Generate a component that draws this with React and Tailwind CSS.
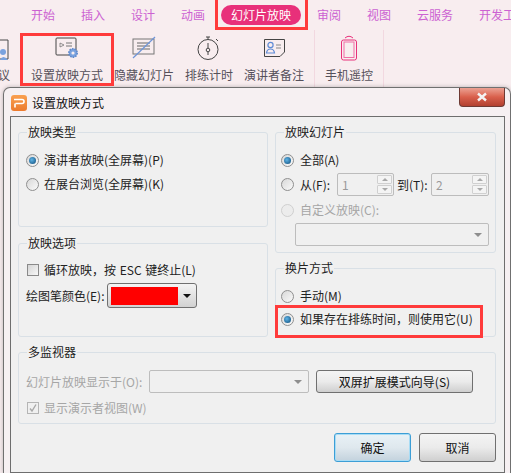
const Radio = ({ on, off }) => (
  <span className={`relative flex h-[13px] w-[13px] shrink-0 items-center justify-center rounded-full border ${off ? 'border-[#cfcfcf] bg-[#ececec]' : 'border-[#8f8f8f] bg-linear-to-br from-[#d8d8d8] to-[#fafafa]'}`}>
    {on && <span className="h-[7px] w-[7px] rounded-full bg-[radial-gradient(circle_at_40%_40%,#5fb4e6,#0d4a78)]" />}
  </span>
);

const Check = ({ checked, off }) => (
  <span className={`ml-[1px] flex h-[12px] w-[12px] shrink-0 items-center justify-center border ${off ? 'border-[#b5b5b5] bg-[#f0f0f0]' : 'border-[#8a8a8a] bg-linear-to-br from-[#d5d5d5] to-[#f8f8f8]'}`}>
    {checked && (
      <svg width="10" height="10" viewBox="0 0 10 10" fill="none"><path d="M2 5.5 L4 8 L8 1.5" stroke="#a8a8a8" strokeWidth="1.4" /></svg>
    )}
  </span>
);

const Group = ({ title, className, children }) => (
  <div className={`relative rounded-[3px] border border-[#d9e0e6] ${className}`}>
    <span className="absolute left-[8px] top-[-9px] bg-[#f0f0f0] px-[1px] text-[12px] leading-[16px] text-[#222]">{title}</span>
    {children}
  </div>
);

const Spin = ({ value, className }) => (
  <div className={`flex h-[23px] items-center justify-between rounded-[2px] border border-[#bcbcbc] bg-[#f0f0f0] pl-[4px] pr-[1px] ${className || ''}`}>
    <span className="text-[12px] text-[#9a9a9a]">{value}</span>
    <div className="flex h-[19px] w-[15px] flex-col gap-[1px]">
      <div className="flex flex-1 items-center justify-center rounded-[1px] border border-[#d0d0d0] bg-[#f4f4f4]">
        <span className="h-0 w-0 border-x-[3px] border-b-[3px] border-x-transparent border-b-[#a8a8a8]" />
      </div>
      <div className="flex flex-1 items-center justify-center rounded-[1px] border border-[#d0d0d0] bg-[#f4f4f4]">
        <span className="h-0 w-0 border-x-[3px] border-t-[3px] border-x-transparent border-t-[#a8a8a8]" />
      </div>
    </div>
  </div>
);

const DisabledSelect = ({ className }) => (
  <div className={`flex h-[23px] shrink-0 items-center justify-end rounded-[2px] border border-[#bdbdbd] bg-[#f0f0f0] pr-[6px] ${className}`}>
    <span className="h-0 w-0 border-x-[4px] border-t-[4px] border-x-transparent border-t-[#8e8e8e]" />
  </div>
);

const Tab = ({ children }) => <span className="shrink-0 whitespace-nowrap text-[12px] leading-[16px] text-[#cc62d2]">{children}</span>;

const Tool = ({ label, w, icon, className }) => (
  <div className={`flex shrink-0 flex-col items-center ${className || ''}`} style={{ width: w }}>
    <div className="flex h-[36px] items-center justify-center">{icon}</div>
    <span className="mt-[1px] whitespace-nowrap text-[12px] leading-[16px] text-[#55505a]">{label}</span>
  </div>
);

const Gear = () => (
  <g>
    <circle cx="18" cy="16" r="4.2" fill="#7aa2de" stroke="#5e88cc" strokeWidth="1.6" strokeDasharray="1.6 1" />
    <circle cx="18" cy="16" r="1.6" fill="#f8edef" />
  </g>
);

export default function App() {
  return (
    <div className="relative h-[473px] w-[511px] overflow-hidden bg-[#f8edef] font-['Noto_Sans_CJK_SC','Liberation_Sans',sans-serif]">
      {/* tabs */}
      <div className="flex h-[30px] items-center overflow-hidden pl-[31px]">
        <div className="flex shrink-0 gap-[26px]">
          <Tab>开始</Tab><Tab>插入</Tab><Tab>设计</Tab><Tab>动画</Tab>
        </div>
        <span className="ml-[16px] flex h-[20px] w-[80px] shrink-0 items-center justify-center rounded-full bg-[#e8307a] text-[12px] text-white">幻灯片放映</span>
        <div className="ml-[16px] flex shrink-0 gap-[26px]">
          <Tab>审阅</Tab><Tab>视图</Tab><Tab>云服务</Tab><Tab>开发工</Tab>
        </div>
      </div>

      {/* toolbar */}
      <div className="flex h-[57px] items-start overflow-hidden">
        <div className="relative h-[57px] w-[29px] shrink-0">
          <svg className="absolute left-0 top-[9px]" width="10" height="22" viewBox="0 0 10 22" fill="none">
            <path d="M0 1 H8 V20 H0" stroke="#4a4a4a" strokeWidth="1" />
            <circle cx="3" cy="13" r="3" fill="#7aa2de" />
            <path d="M0 21 Q3 15 8 21Z" fill="#7aa2de" />
          </svg>
          <span className="absolute left-[-2px] top-[37px] text-[12px] leading-[16px] text-[#55505a]">议</span>
        </div>
        <Tool label="设置放映方式" w={76} icon={
          <svg width="24" height="22" viewBox="0 0 24 22" fill="none">
            <rect x="1" y="1" width="20" height="17" rx="1" fill="#f8edef" stroke="#444" strokeWidth="1" />
            <path d="M5 6 L9 8 L5 10Z" stroke="#777" strokeWidth="0.8" />
            <path d="M11 6 H17 M11 9 H17" stroke="#777" strokeWidth="1" />
            <Gear />
          </svg>
        } />
        <Tool className="ml-[9px]" label="隐藏幻灯片" w={60} icon={
          <svg width="24" height="24" viewBox="0 0 24 24" fill="none">
            <rect x="1" y="3" width="21" height="15" stroke="#777" strokeWidth="1" />
            <path d="M5 7 H18 M5 10 H18 M5 13 H18" stroke="#666" strokeWidth="1" />
            <path d="M1 22 L23 1" stroke="#6f95d8" strokeWidth="1.2" />
          </svg>
        } />
        <Tool className="ml-[10px]" label="排练计时" w={50} icon={
          <svg width="24" height="24" viewBox="0 0 24 24" fill="none">
            <circle cx="11" cy="13.5" r="10" stroke="#444" strokeWidth="1" />
            <path d="M9 1 H13 M11 1 V3.5 M19 3 L21 5" stroke="#444" strokeWidth="1" />
            <circle cx="11" cy="14" r="1.8" stroke="#444" strokeWidth="1" />
            <path d="M11 7 V12 M11 16 V19" stroke="#444" strokeWidth="1" />
          </svg>
        } />
        <Tool className="ml-[10px]" label="演讲者备注" w={60} icon={
          <svg width="23" height="20" viewBox="0 0 23 20" fill="none">
            <path d="M1.5 1.5 H21.5 V14 L17 18.5 H1.5Z" stroke="#444" strokeWidth="1" />
            <circle cx="7.5" cy="7" r="2.6" stroke="#5f8bd6" strokeWidth="1.2" />
            <path d="M3.5 15 Q4 11 7.5 11 Q11 11 11.5 15Z" stroke="#5f8bd6" strokeWidth="1.2" />
            <path d="M13 7 H18 M13 10 H18" stroke="#888" strokeWidth="1" />
          </svg>
        } />
        <div className="ml-[10px] h-[57px] w-[1px] shrink-0 bg-[#f2d8e0]" />
        <Tool className="ml-[10px]" label="手机遥控" w={48} icon={
          <svg width="16" height="26" viewBox="0 0 16 26" fill="none">
            <path d="M4 3 Q8 -0.5 12 3" stroke="#e8307a" strokeWidth="1" />
            <rect x="0.5" y="5" width="15" height="20" rx="2" stroke="#e8307a" strokeWidth="1" />
            <rect x="3" y="7" width="10" height="15.5" stroke="#ef6fa5" strokeWidth="1" />
          </svg>
        } />
        <div className="ml-[10px] h-[57px] w-[1px] shrink-0 bg-[#f2d8e0]" />
      </div>

      {/* dialog window */}
      <div className="relative ml-[3px] w-[508px] rounded-t-[7px] border border-b-0 border-[#707070] bg-[#f6f0f2] shadow-[0_0_4px_rgba(0,0,0,0.25)]">
        <div className="flex h-[28px] items-center pl-[7px] pt-[1px]">
          <span className="flex h-[16px] w-[16px] items-center justify-center rounded-[3px] bg-linear-to-b from-[#f9a050] to-[#ec7a2c]">
            <svg width="12" height="10" viewBox="0 0 12 10" fill="none"><path d="M1 1.5 H9 Q11 1.5 11 3.5 Q11 5.5 9 5.5 H2.5 M2 5.5 V9.5" stroke="#fff" strokeWidth="1.6" /></svg>
          </span>
          <span className="ml-[5px] text-[12px] leading-[16px] text-[#111]">设置放映方式</span>
        </div>
        <div className="absolute right-[5px] top-0 flex h-[19px] w-[46px] items-center justify-center rounded-b-[4px] border border-t-0 border-[#6e3a34] bg-linear-to-b from-[#eba193] via-[#d9604c] to-[#b24030]">
          <svg width="12" height="10" viewBox="0 0 12 10" fill="none"><path d="M2 1.5 L10 8.5 M10 1.5 L2 8.5" stroke="#f4f4f4" strokeWidth="2.4" /></svg>
        </div>

        <div className="ml-[6px] h-[357px] w-[495px] border border-[#6e6e6e] bg-[#f0f0f0] pl-[7px] pt-[15px]">
          <div className="flex gap-[7px]">
            <div className="flex w-[250px] flex-col gap-[16px]">
              <Group title="放映类型" className="h-[95px] pl-[7px] pt-[19px]">
                <div className="flex items-center gap-[5px] text-[12px] leading-[16px] text-[#222]"><Radio on /><span>演讲者放映(全屏幕)(P)</span></div>
                <div className="mt-[8px] flex items-center gap-[5px] text-[12px] leading-[16px] text-[#222]"><Radio /><span>在展台浏览(全屏幕)(K)</span></div>
              </Group>
              <Group title="放映选项" className="h-[94px] pl-[7px] pt-[18px]">
                <div className="flex items-center gap-[5px] text-[12px] leading-[16px] text-[#222]"><Check /><span className="whitespace-pre [word-spacing:1px]">循环放映，按 ESC 键终止(L)</span></div>
                <div className="mt-[5px] flex items-center text-[12px] leading-[16px] text-[#222]">
                  <span className="w-[81px] shrink-0 whitespace-nowrap">绘图笔颜色(E):</span>
                  <div className="flex h-[25px] w-[90px] items-center rounded-[3px] border border-[#707070] bg-linear-to-b from-[#f4f4f4] to-[#d2d2d2] pl-[3px]">
                    <span className="h-[18px] w-[67px] bg-[#ff0000]" />
                    <span className="ml-[5px] h-0 w-0 border-x-[4px] border-t-[4px] border-x-transparent border-t-[#111]" />
                  </div>
                </div>
              </Group>
            </div>

            <div className="flex w-[221px] flex-col gap-[15px]">
              <Group title="放映幻灯片" className="h-[121px] pl-[5px] pt-[19px]">
                <div className="flex items-center gap-[6px] text-[12px] leading-[16px] text-[#222]"><Radio on /><span>全部(A)</span></div>
                <div className="mt-[5px] flex h-[23px] items-center text-[12px] leading-[16px] text-[#222]">
                  <Radio /><span className="ml-[6px] w-[37px] shrink-0">从(F):</span>
                  <Spin value="1" className="w-[57px]" />
                  <span className="ml-[3px] w-[34px] shrink-0 whitespace-nowrap">到(T):</span>
                  <Spin value="2" className="w-[58px]" />
                </div>
                <div className="mt-[6px] flex items-center gap-[6px] text-[12px] leading-[16px] text-[#a6a6a6]"><Radio off /><span>自定义放映(C):</span></div>
                <DisabledSelect className="ml-[14px] mt-[5px] w-[194px]" />
              </Group>
              <Group title="换片方式" className="h-[69px] pl-[5px] pt-[19px]">
                <div className="flex items-center gap-[6px] text-[12px] leading-[16px] text-[#222]"><Radio /><span>手动(M)</span></div>
                <div className="mt-[7px] flex items-center gap-[6px] text-[12px] leading-[16px] text-[#222]"><Radio on /><span>如果存在排练时间，则使用它(U)</span></div>
              </Group>
            </div>
          </div>

          <Group title="多监视器" className="mt-[15px] h-[72px] w-[478px] pl-[7px] pt-[17px]">
            <div className="flex items-center text-[12px] leading-[16px] text-[#a6a6a6]">
              <span className="w-[123px] shrink-0 whitespace-nowrap">幻灯片放映显示于(O):</span>
              <DisabledSelect className="w-[160px]" />
              <div className="ml-[7px] flex h-[23px] w-[157px] shrink-0 items-center justify-center rounded-[3px] border border-[#707070] bg-linear-to-b from-[#f4f4f4] via-[#ebebeb] to-[#cfcfcf] text-[#111]">双屏扩展模式向导(S)</div>
            </div>
            <div className="mt-[7px] flex items-center gap-[5px] text-[12px] leading-[16px] text-[#a6a6a6]"><Check checked off /><span>显示演示者视图(W)</span></div>
          </Group>

          <div className="mt-[9px] flex w-[478px] justify-end gap-[8px] text-[12px]">
            <div className="flex h-[29px] w-[77px] items-center justify-center rounded-[3px] border border-[#3c9ed6] bg-linear-to-b from-[#e8f1f6] via-[#dfe8ee] to-[#c3d2dd] text-[#111] shadow-[inset_0_0_0_1px_#a8dcf5]">确定</div>
            <div className="flex h-[29px] w-[77px] items-center justify-center rounded-[3px] border border-[#707070] bg-linear-to-b from-[#f4f4f4] via-[#ebebeb] to-[#cfcfcf] text-[#111]">取消</div>
          </div>
        </div>
      </div>

      {/* red annotation rectangles */}
      <div className="absolute left-[215px] top-0 h-[30px] w-[93px] border-[3px] border-t-0 border-[#ff3b3b]" />
      <div className="absolute left-[20px] top-[33px] h-[53px] w-[94px] border-[3px] border-[#ff3b3b]" />
      <div className="absolute left-[275px] top-[305px] h-[33px] w-[208px] border-[3px] border-[#ff3b3b]" />
    </div>
  );
}
